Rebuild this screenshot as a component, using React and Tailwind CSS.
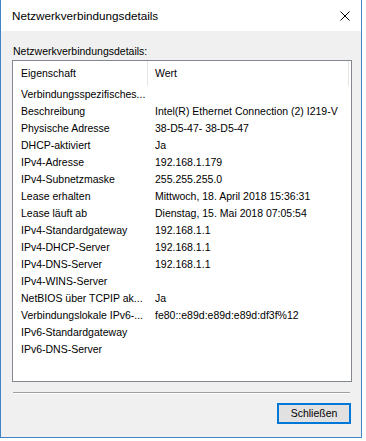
import React from 'react';

const rows = [
  ['Verbindungsspezifisches...', ''],
  ['Beschreibung', 'Intel(R) Ethernet Connection (2) I219-V'],
  ['Physische Adresse', '38-D5-47- 38-D5-47'],
  ['DHCP-aktiviert', 'Ja'],
  ['IPv4-Adresse', '192.168.1.179'],
  ['IPv4-Subnetzmaske', '255.255.255.0'],
  ['Lease erhalten', 'Mittwoch, 18. April 2018 15:36:31'],
  ['Lease läuft ab', 'Dienstag, 15. Mai 2018 07:05:54'],
  ['IPv4-Standardgateway', '192.168.1.1'],
  ['IPv4-DHCP-Server', '192.168.1.1'],
  ['IPv4-DNS-Server', '192.168.1.1'],
  ['IPv4-WINS-Server', ''],
  ['NetBIOS über TCPIP ak...', 'Ja'],
  ['Verbindungslokale IPv6-...', 'fe80::e89d:e89d:e89d:df3f%12'],
  ['IPv6-Standardgateway', ''],
  ['IPv6-DNS-Server', ''],
];

export default function App() {
  return (
    <div className="w-[366px] h-[441px] bg-white font-['Liberation_Sans',Arial,sans-serif] text-black">
      {/* Dialogfenster */}
      <div className="w-[362px] h-[438px] border-l border-r border-b border-[#3f86c6] flex flex-col">
        {/* Titelleiste */}
        <div className="h-[31px] bg-white flex items-center justify-between pl-[11px] pr-[8px]">
          <span className="text-[11.7px] leading-[16px] pt-[1px]">Netzwerkverbindungsdetails</span>
          <svg width="12" height="12" viewBox="0 0 12 12" className="mr-[2px]">
            <path d="M1.5 1.5 L10.5 10.5 M10.5 1.5 L1.5 10.5" stroke="#000" strokeWidth="1" />
          </svg>
        </div>

        <div className="flex-1 bg-[#f0f0f0] flex flex-col px-[11px] pt-[14px]">
          <div className="text-[10.5px] leading-[13px] pl-[1px]">Netzwerkverbindungsdetails:</div>

          {/* Liste */}
          <div className="mt-[2px] h-[322px] w-[340px] bg-white border border-[#828790] overflow-hidden text-[10.5px]">
            <div className="flex h-[25px] items-center">
              <div className="w-[135px] h-full flex items-center pl-[8px] border-r border-[#e5e5e5]">Eigenschaft</div>
              <div className="w-[201px] h-full flex items-center pl-[7px] border-r border-[#e5e5e5]">Wert</div>
            </div>
            {rows.map((r, i) => (
              <div key={i} className="flex h-[17px] items-center leading-[17px] whitespace-nowrap">
                <div className="w-[136px] pl-[8px] overflow-hidden">{r[0]}</div>
                <div className="pl-[6px]">{r[1]}</div>
              </div>
            ))}
          </div>

          {/* Trennlinie */}
          <div className="mt-[10px] ml-[1px] w-[337px] h-[2px] border-t border-[#a0a0a0] border-b border-b-white"></div>

          <div className="flex justify-end mt-[9px] pr-[-1px]">
            <button className="w-[74px] h-[21px] bg-[#e1e1e1] border-2 border-[#0078d7] text-[10.5px] leading-[15px] -mr-[1px]">
              Schließen
            </button>
          </div>
        </div>
      </div>
    </div>
  );
}
